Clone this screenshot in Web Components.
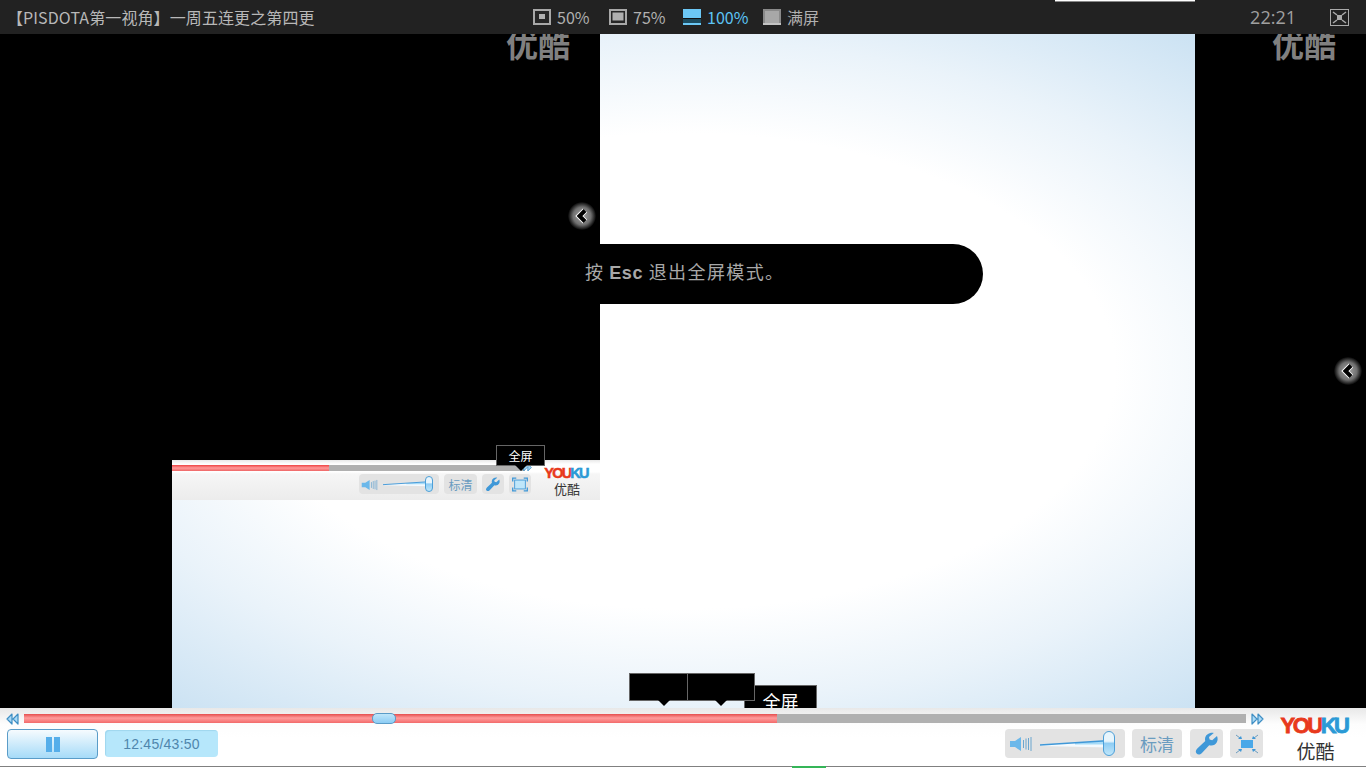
<!DOCTYPE html>
<html>
<head>
<meta charset="utf-8">
<style>
  html, body { margin: 0; height: 100%; background: #fff; overflow: hidden; }
  body { font-family: "Liberation Sans", "Noto Sans CJK SC", sans-serif; }
</style>
</head>
<body>
<yk-player></yk-player>
<script>
const CJK = '"Noto Sans CJK SC", sans-serif';

const speakerIcon = `<svg viewBox="0 0 25 18" width="100%" height="100%"><path d="M1 6h5l6-4v14l-6-4H1z" fill="#6bb8ea"/><path d="M14.500 5v8M17 3.500v11M19.500 3v12M22 2v14" stroke="#6aa6cf" stroke-width="1" fill="none"/></svg>`;
const wrenchIcon = `<svg viewBox="0 0 24 24"><path d="M22 4l-4.800 4.200-2.600-.7-.6-2.500L18.800 1C15 .2 10 2.500 10 7.200c0 .8.100 1.300.3 1.900L2.300 16.600c-2 1.900-1.700 3.900-.7 5 1.100 1.100 3.300 1.500 5.100-.4l7.500-7.900c.7.200 1.400.3 2.200.3 4.700 0 7.600-5 5.600-9.600z" fill="#3f98d8"/></svg>`;
const shrinkIcon = `<svg viewBox="0 0 24 20"><rect x="6" y="6" width="12" height="8" fill="#4aa8e8"/><path d="M1 1l4 3M23 1l-4 3M1 19l4-3M23 19l-4-3" stroke="#6d9dbf" stroke-width="1"/><path d="M7 5H3l3-3zM17 5h4l-3-3zM7 15H3l3 3zM17 15h4l-3 3z" fill="#3f98d8"/></svg>`;
const expandIcon = `<svg viewBox="0 0 18 16"><rect x="3" y="3" width="12" height="10" fill="#bfe6fa" stroke="#3f98d8"/><path d="M.8 4.500V.8h4M13.200.8h4v3.700M.8 11.500v3.700h4M13.200 15.200h4v-3.700" stroke="#3f98d8" stroke-width="1.500" fill="none"/></svg>`;
const rewindIcon = `<svg viewBox="0 0 13 12" width="13" height="12"><path d="M6 1L1 6l5 5zM12 1L7 6l5 5z" fill="#a9d9f6" stroke="#3f8fc4" stroke-width="1.200" stroke-linejoin="round"/></svg>`;
const forwardIcon = `<svg viewBox="0 0 13 12" width="13" height="12"><path d="M1 1l5 5-5 5zM7 1l5 5-5 5z" fill="#a9d9f6" stroke="#3f8fc4" stroke-width="1.200" stroke-linejoin="round"/></svg>`;

class YkZoomOption extends HTMLElement {
  constructor() {
    super();
    this.attachShadow({ mode: "open" });
    const kind = this.getAttribute("kind");
    const icons = {
      half: `<rect x="1" y="1" width="16" height="14" fill="#262626" stroke="#a8a8a8" stroke-width="2"/><rect x="6" y="5" width="6" height="5" fill="#b0b0b0"/>`,
      three: `<rect x="1" y="1" width="16" height="14" fill="#262626" stroke="#a8a8a8" stroke-width="2"/><rect x="3.500" y="3.500" width="11" height="8" fill="#b0b0b0"/>`,
      full: `<rect width="18" height="9" fill="#6cc8f6"/><rect y="9" width="18" height="1" fill="#111"/><rect y="10" width="18" height="4" fill="#1c4c60"/><rect y="14" width="18" height="2" fill="#6cc8f6"/>`,
      fill: `<rect x="1" y="1" width="16" height="14" fill="#a8a8a8" stroke="#8a8a8a" stroke-width="2"/><rect y="14" width="18" height="2" fill="#c4c4c4"/>`
    };
    this.shadowRoot.innerHTML = `
      <style>
        :host { display: flex; align-items: center; gap: 6px; color: #b0b0b0; font: 16px ${CJK}; white-space: nowrap; }
        :host([active]) { color: #5cc4f5; }
        svg { width: 18px; height: 16px; flex: none; }
      </style>
      <svg viewBox="0 0 18 16">${icons[kind]}</svg><slot></slot>`;
  }
}

class YkTopbar extends HTMLElement {
  constructor() {
    super();
    this.attachShadow({ mode: "open" });
    this.shadowRoot.innerHTML = `
      <style>
        :host { display: block; height: 34px; background: #222; position: relative; }
        .row { display: grid; box-sizing: border-box; padding-right: 17px; grid-template-columns: 533px 76px 74px 80px auto 1fr auto auto; align-items: center; height: 100%; }
        .title { color: #b8b8b8; font: 16px ${CJK}; padding-left: 7px; letter-spacing: .1px; white-space: nowrap; overflow: hidden; }
        .clock { color: #a0a0a0; font: 18px "Open Sans", sans-serif; margin-right: 34px; }
        .exit { width: 19px; height: 17px; display: block; }
        .sliver { position: absolute; left: 1055px; top: 0; width: 140px; height: 1px; background: #fff; box-shadow: 0 1px 0 #888; }
      </style>
      <div class="row">
        <div class="title">【PISDOTA第一视角】一周五连更之第四更</div>
        <yk-zoom-option kind="half">50%</yk-zoom-option>
        <yk-zoom-option kind="three">75%</yk-zoom-option>
        <yk-zoom-option kind="full" active>100%</yk-zoom-option>
        <yk-zoom-option kind="fill">满屏</yk-zoom-option>
        <div></div>
        <div class="clock">22:21</div>
        <svg class="exit" viewBox="0 0 19 17"><rect x=".5" y=".5" width="18" height="16" fill="none" stroke="#aaa"/><rect x="7" y="6" width="5" height="5" fill="#aaa"/><path d="M3 3l4 3M16 3l-4 3M3 14l4-3M16 14l-4-3" stroke="#aaa" stroke-width="1.500"/></svg>
      </div>
      <div class="sliver"></div>`;
  }
}

class YkWatermark extends HTMLElement {
  constructor() {
    super();
    this.attachShadow({ mode: "open" });
    this.shadowRoot.innerHTML = `
      <style>
        :host { display: block; position: absolute; top: -11px; color: #808080; font: bold 32px/40px ${CJK}; }
      </style>优酷`;
  }
}

class YkSideArrow extends HTMLElement {
  constructor() {
    super();
    this.attachShadow({ mode: "open" });
    this.shadowRoot.innerHTML = `
      <style>
        :host { display: block; position: absolute; width: 28px; height: 28px; border-radius: 50%;
          background: radial-gradient(circle, #a8a8a8 0, #707070 45%, #000 72%); }
        svg { display: block; width: 28px; height: 28px; }
      </style>
      <svg viewBox="0 0 28 28"><path d="M17 8.500L11.500 14l5.500 5.500" fill="none" stroke="#fff" stroke-width="6"/><path d="M17 8.500L11.500 14l5.500 5.500" fill="none" stroke="#000" stroke-width="4"/></svg>`;
  }
}

class YkTip extends HTMLElement {
  constructor() {
    super();
    this.attachShadow({ mode: "open" });
    this.shadowRoot.innerHTML = `
      <style>
        :host { display: flex; position: absolute; box-sizing: border-box; align-items: center; justify-content: center;
          background: #000; border: 1px solid #666; color: #fff; font: 12px ${CJK}; }
        :host([arrow])::after { content: ""; position: absolute; left: var(--ax, 50%); bottom: -6px; margin-left: -6px;
          border: 6px solid transparent; border-bottom: 0; border-top-color: #000; }
      </style><slot></slot>`;
  }
}

class YkVolume extends HTMLElement {
  constructor() {
    super();
    this.attachShadow({ mode: "open" });
    this.shadowRoot.innerHTML = `
      <style>
        :host { display: block; position: relative; box-sizing: border-box; width: var(--w, 120px); height: var(--h, 29px);
          background: #e3e3e3; border-radius: 4px; }
        .spk { position: absolute; left: var(--spk-x, 4px); top: 50%; width: var(--spk-w, 25px); height: var(--spk-h, 18px); transform: translateY(-50%); }
        .line { position: absolute; left: var(--line-x, 35px); right: var(--line-r, 12px); top: 50%; height: var(--line-h, 9px); width: auto; transform: translateY(-50%); display: block; }
        .knob { position: absolute; right: var(--knob-r, 10px); top: 2px; bottom: 2px; width: var(--knob-w, 12px); box-sizing: border-box;
          border: 1px solid #4c9fd8; border-radius: 6px; background: linear-gradient(#e8f5fc 40%, #8fcdf4 50%, #bfe6fa); }
      </style>
      <div class="spk">${speakerIcon}</div>
      <svg class="line" viewBox="0 0 70 9" preserveAspectRatio="none"><path d="M0 5.500L70 1v7L0 6.500z" fill="#f4fafe"/><path d="M35 3.200L70 1v4L35 5z" fill="#a6dbf8"/><path d="M0 5.500L70 1" stroke="#3f98d8" stroke-width="1.400" fill="none"/></svg>
      <div class="knob"></div>`;
  }
}

class YkTool extends HTMLElement {
  constructor() {
    super();
    this.attachShadow({ mode: "open" });
    this.shadowRoot.innerHTML = `
      <style>
        :host { display: flex; align-items: center; justify-content: center; box-sizing: border-box; height: var(--h, 29px);
          background: #e3e3e3; border-radius: 4px; color: #6a9cc0; font: var(--fs, 17px) ${CJK}; }
      </style><slot></slot>`;
  }
}

class YkLogo extends HTMLElement {
  constructor() {
    super();
    this.attachShadow({ mode: "open" });
    this.shadowRoot.innerHTML = `
      <style>
        :host { display: flex; flex-direction: column; align-items: center; width: var(--w, 68px); }
        .mark { font: bold var(--mark, 22px)/1 "Liberation Sans", sans-serif; letter-spacing: var(--ls, -2.500px); white-space: nowrap; -webkit-text-stroke: var(--stroke, .8px) currentColor; color: #e8391c; }
        .mark span { color: #2a9ad6; }
        .cn { color: #333; font: var(--cn, 19px)/1 ${CJK}; margin: var(--gap, 4px) 0 0 var(--cn-x, 3px); }
      </style>
      <div class="mark">YOU<span>KU</span></div><div class="cn">优酷</div>`;
  }
}

class YkMiniPlayer extends HTMLElement {
  constructor() {
    super();
    this.attachShadow({ mode: "open" });
    this.shadowRoot.innerHTML = `
      <style>
        :host { display: block; position: relative; height: 40px; background: linear-gradient(#e8e8e8, #fff 4px, #fff 12px, #f6f6f6 14px, #ececec); }
        .track { position: absolute; left: 0; right: 75px; top: 4.500px; height: 6px; background: #b0b0b0; }
        .played { width: 157px; height: 100%; background: linear-gradient(#e44, #ff9a9a 50%, #e66); }
        .fwd { position: absolute; left: 351px; top: 3px; }
        .fwd svg { width: 9px; height: 9px; display: block; }
        .row { position: absolute; left: 187px; top: 14px; display: flex; gap: 5px; }
        yk-volume { --w: 80px; --h: 20px; --spk-x: 2px; --spk-w: 18px; --spk-h: 13px; --line-x: 24px; --line-r: 8px; --line-h: 6px; --knob-r: 6px; --knob-w: 8px; }
        yk-tool { --h: 20px; --fs: 12px; }
        .wide { width: 33px; }
        .narrow { width: 22px; }
        .narrow svg { width: 16px; height: 15px; display: block; }
        yk-logo { position: absolute; left: 371px; top: 6px; --w: 46px; --mark: 14.500px; --ls: -1.800px; --stroke: .5px; --cn: 13px; --gap: 1px; --cn-x: 2px; }
      </style>
      <div class="track"><div class="played"></div></div>
      <div class="fwd">${forwardIcon}</div>
      <div class="row">
        <yk-volume></yk-volume>
        <yk-tool class="wide">标清</yk-tool>
        <yk-tool class="narrow">${wrenchIcon}</yk-tool>
        <yk-tool class="narrow">${expandIcon}</yk-tool>
      </div>
      <yk-logo></yk-logo>`;
  }
}

class YkControlbar extends HTMLElement {
  constructor() {
    super();
    this.attachShadow({ mode: "open" });
    this.shadowRoot.innerHTML = `
      <style>
        :host { display: block; box-sizing: border-box; height: 59px; background: linear-gradient(#e8e8e8, #fdfdfd 16px, #fff 30px, #fff); border-bottom: 1px solid #808080; position: relative; }
        .scrub { display: grid; grid-template-columns: 24px 1fr 23px 97px; grid-template-rows: 9px; align-items: center; padding-top: 6px; }
        .scrub svg { justify-self: center; }
        .track { position: relative; height: 9px; background: #b0b0b0; }
        .played { width: 753px; height: 100%; background: linear-gradient(#e54e4e, #ff9c9c 45%, #f26a6a); }
        .knob { position: absolute; left: 348px; top: -1px; width: 24px; height: 11px; box-sizing: border-box; border: 1px solid #5a9cc8; border-radius: 5px; background: linear-gradient(#bfe6fa, #8cccf4); }
        .row { display: flex; align-items: flex-start; padding: 6px 0 0 7px; }
        .pause { box-sizing: border-box; width: 91px; height: 30px; border: 1px solid #5a9cc8; border-radius: 4px; background: linear-gradient(#f6fbfe, #a6dbf8); display: flex; justify-content: center; align-items: center; gap: 2px; }
        .pause i { display: block; width: 6px; height: 15px; background: #55aeea; }
        .time { box-sizing: border-box; width: 113px; height: 27px; margin: 1px 0 0 7px; border-radius: 4px; background: #b6e7fb; box-shadow: inset 1px 1px 1px #9fd6ee; color: #4f86ad; font: 14px/28px "Liberation Sans", sans-serif; letter-spacing: .25px; text-align: center; }
        .spacer { flex: 1; }
        .right { display: flex; gap: 7px; margin-right: 103px; }
        .right yk-tool:nth-of-type(1) { width: 50px; }
        .right yk-tool:nth-of-type(2), .right yk-tool:nth-of-type(3) { width: 33px; }
        .right yk-tool:nth-of-type(2) { margin-left: 1px; }
        .right yk-tool:nth-of-type(2) svg { width: 24px; height: 24px; display: block; }
        .right yk-tool:nth-of-type(3) svg { width: 24px; height: 20px; display: block; }
        yk-logo { position: absolute; right: 18px; top: 7px; }
        .green { position: absolute; left: 792px; bottom: -2px; width: 34px; height: 2px; background: #35b558; }
      </style>
      <div class="scrub">
        ${rewindIcon}
        <div class="track"><div class="played"></div><div class="knob"></div></div>
        ${forwardIcon}
        <div></div>
      </div>
      <div class="row">
        <div class="pause"><i></i><i></i></div>
        <div class="time">12:45/43:50</div>
        <div class="spacer"></div>
        <div class="right">
          <yk-volume></yk-volume>
          <yk-tool>标清</yk-tool>
          <yk-tool>${wrenchIcon}</yk-tool>
          <yk-tool>${shrinkIcon}</yk-tool>
        </div>
      </div>
      <yk-logo></yk-logo>
      <div class="green"></div>`;
  }
}

class YkStage extends HTMLElement {
  constructor() {
    super();
    this.attachShadow({ mode: "open" });
    this.shadowRoot.innerHTML = `
      <style>
        :host { display: grid; position: relative; height: 674px; overflow: hidden; background: #000;
          grid-template-columns: 172px 428px 595px 171px; grid-template-rows: 426px 40px 208px; }
        .video { grid-column: 2 / 4; grid-row: 1 / 4;
          background: radial-gradient(ellipse 800px 440px at 511px 337px, #fff 0, #fff 54%, #eaf3fa 75%, #cbe2f3 100%); background-color: #cbe2f3; }
        .cover { grid-column: 2; grid-row: 1; background: #000; }
        yk-mini-player { grid-column: 2; grid-row: 2; }
        .pill { position: absolute; left: 560px; top: 210px; width: 423px; height: 60px; box-sizing: border-box; padding-left: 25px; background: #000; border-radius: 0 30px 30px 0; color: #a8a8a8; font: 18px/55px ${CJK}; letter-spacing: .6px; word-spacing: 1px; white-space: nowrap; }
        .pill b { font-family: "Liberation Sans", sans-serif; }
        .pill span { letter-spacing: 1.400px; }
        .clipped { font: 18px/24px ${CJK}; align-items: flex-start; padding-top: 3px; }
      </style>
      <div class="video"></div>
      <div class="cover"></div>
      <yk-mini-player></yk-mini-player>
      <yk-watermark style="left:506px"></yk-watermark>
      <yk-watermark style="left:1272px"></yk-watermark>
      <yk-side-arrow style="left:568px;top:168px"></yk-side-arrow>
      <yk-side-arrow style="left:1334px;top:323px"></yk-side-arrow>
      <div class="pill">按 <b>Esc</b> <span>退出全屏模式。</span></div>
      <yk-tip arrow style="left:496px;top:411px;width:49px;height:21px">全屏</yk-tip>
      <yk-tip class="clipped" style="left:744px;top:651px;width:73px;height:30px">全屏</yk-tip>
      <yk-tip arrow style="left:629px;top:639px;width:59px;height:28px;--ax:34px"></yk-tip>
      <yk-tip arrow style="left:687px;top:639px;width:68px;height:28px"></yk-tip>`;
  }
}

class YkPlayer extends HTMLElement {
  constructor() {
    super();
    this.attachShadow({ mode: "open" });
    this.shadowRoot.innerHTML = `
      <style>
        :host { display: block; width: 1366px; height: 768px; }
      </style>
      <yk-topbar></yk-topbar>
      <yk-stage></yk-stage>
      <yk-controlbar></yk-controlbar>`;
  }
}

customElements.define("yk-zoom-option", YkZoomOption);
customElements.define("yk-topbar", YkTopbar);
customElements.define("yk-watermark", YkWatermark);
customElements.define("yk-side-arrow", YkSideArrow);
customElements.define("yk-tip", YkTip);
customElements.define("yk-volume", YkVolume);
customElements.define("yk-tool", YkTool);
customElements.define("yk-logo", YkLogo);
customElements.define("yk-mini-player", YkMiniPlayer);
customElements.define("yk-controlbar", YkControlbar);
customElements.define("yk-stage", YkStage);
customElements.define("yk-player", YkPlayer);
</script>
</body>
</html>
